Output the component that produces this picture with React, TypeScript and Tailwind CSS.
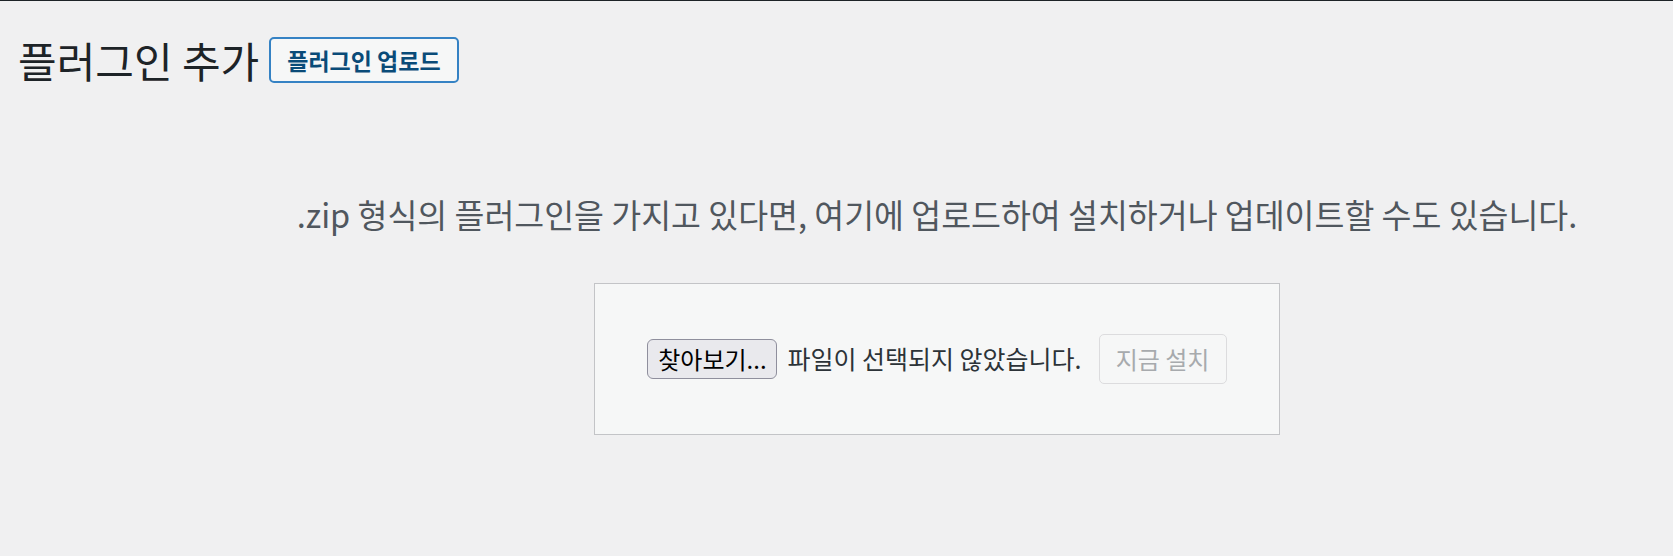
export default function App() {
  return (
    <main className="min-h-[556px] bg-[#f0f0f1] font-['Noto_Sans_CJK_KR','Noto_Sans',sans-serif]">
      {/* admin bar edge */}
      <div className="h-px bg-[#1d2327]" />

      {/* Header */}
      <div className="flex items-center gap-[10px] pl-[18px] pt-[36px]">
        <h1 className="text-[42px] leading-[46px] text-[#1d2327] font-normal">플러그인 추가</h1>
        <button className="h-[46px] px-[16px] border-2 border-[#3582c4] rounded-[5px] bg-[#f6f7f7] text-[23px] font-semibold leading-none text-[#0a4b78]">
          플러그인 업로드
        </button>
      </div>

      {/* Upload */}
      <section className="pl-[201px] text-center">
        <p className="mt-[111px] text-[32.5px] leading-[40px] text-[#50575e]">
          .zip 형식의 플러그인을 가지고 있다면, 여기에 업로드하여 설치하거나 업데이트할 수도 있습니다.
        </p>

        <form className="mx-auto mt-[49px] w-[686px] h-[152px] flex items-center justify-center border border-[#c3c4c7] bg-[#f6f7f7]">
          <span className="w-[130px] h-[40px] flex items-center justify-center border border-[#8f8f9d] rounded-[6px] bg-[#e9e9ed] text-[24px] text-black">
            찾아보기...
          </span>
          <span className="ml-[10px] text-[25px] text-[#2c3338]">파일이 선택되지 않았습니다.</span>
          <button
            type="button"
            disabled
            className="ml-[17px] w-[128px] h-[50px] border border-[#dcdcde] rounded-[5px] bg-[#f6f7f7] text-[24px] text-[#a7aaad]"
          >
            지금 설치
          </button>
        </form>
      </section>
    </main>
  )
}
